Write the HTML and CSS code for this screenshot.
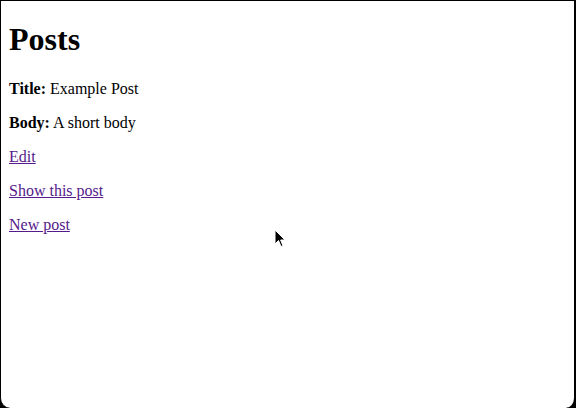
FILE: index.html
```html
<!DOCTYPE html>
<html>
<head>
	<link rel="stylesheet" href="styles.css">
</head>
<body>
	<div class="window">
		<h1>Posts</h1>

		<div id="post_1">
			<p><strong>Title:</strong> Example Post</p>
			<p><strong>Body:</strong> A short body</p>
		</div>

		<p><a href="#" class="visited">Edit</a></p>
		<p><a href="#" class="visited">Show this post</a></p>
		<p><a href="#" class="visited">New post</a></p>

		<svg class="cursor" width="12" height="19" viewBox="0 0 12 19">
			<path d="M1 1 L1 15 L4.5 11.5 L7 17.5 L9 16.7 L6.6 11 L11 11 Z" fill="#000" stroke="#fff" stroke-width="1"/>
		</svg>
	</div>
</body>
</html>
```

FILE: styles.css
```css
html, body {
  margin: 0;
  height: 100%;
  background: #000;
}

.window {
  position: relative;
  box-sizing: border-box;
  height: 100%;
  padding: 0 8px;
  background: #fff;
  border-top: 1px solid #000;
  border-left: 1px solid #000;
  border-right: 2px solid #000;
  border-radius: 0 0 10px 10px;
  font-family: "Liberation Serif", "Times New Roman", serif;
  font-size: 16px;
  color: #000;
  overflow: hidden;
}

h1 {
  font-size: 2em;
  margin: 20.4px 0 21.4px;
}

p {
  margin: 1em 0;
}

a.visited {
  color: #551a8b;
}

.cursor {
  position: absolute;
  left: 273px;
  top: 228px;
}
```
